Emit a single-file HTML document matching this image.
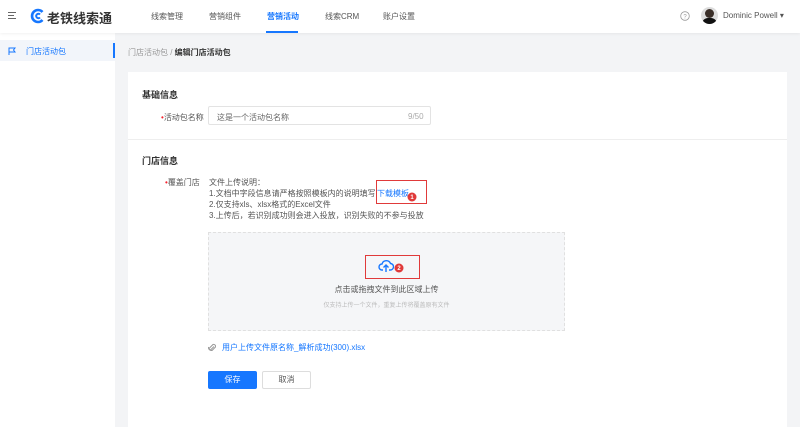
<!DOCTYPE html>
<html><head><meta charset="utf-8"><style>
*{margin:0;padding:0;box-sizing:border-box}
body{width:800px;height:427px;overflow:hidden;background:#f3f4f6;font-family:"Liberation Sans","Noto Sans CJK SC",sans-serif;font-size:8px;color:#333;position:relative}
.abs{position:absolute}
.hdr{left:0;top:0;width:800px;height:33px;background:#fff;box-shadow:0 1px 3px rgba(0,0,0,.06);z-index:2}
.nav{top:11px;font-size:8px;color:#555}
.side{left:0;top:33px;width:115px;height:394px;background:#fff}
.card{left:128px;top:72px;width:659px;height:355px;background:#fff}
.red{color:#f5222d}
</style></head><body>
<div class="abs hdr">
  <div class="abs" style="left:8px;top:12px;width:8px;height:8px">
    <div style="height:1px;background:#666;margin-bottom:2px"></div><div style="height:1px;width:6px;background:#666;margin-bottom:2px"></div><div style="height:1px;background:#666"></div>
  </div>
  <svg class="abs" style="left:30px;top:8px" width="16" height="16" viewBox="0 0 16 16"><path d="M12.5 4A6 6 0 1 0 12.5 12" fill="none" stroke="#1677ff" stroke-width="2.6"/><path d="M10 6.5A2.2 2.2 0 1 0 10 9.5" fill="none" stroke="#1677ff" stroke-width="2"/></svg>
  <div class="abs" style="left:47px;top:8px;font-size:13px;font-weight:bold;color:#333">老铁线索通</div>
  <div class="abs nav" style="left:151px">线索管理</div>
  <div class="abs nav" style="left:209px">营销组件</div>
  <div class="abs nav" style="left:267px;color:#1677ff;font-weight:bold">营销活动</div>
  <div class="abs" style="left:266px;top:31px;width:32px;height:2px;background:#1677ff"></div>
  <div class="abs nav" style="left:325px">线索CRM</div>
  <div class="abs nav" style="left:383px">账户设置</div>
  <svg class="abs" style="left:680px;top:11px" width="10" height="10" viewBox="0 0 10 10"><circle cx="5" cy="5" r="4.3" fill="none" stroke="#999" stroke-width=".8"/><text x="5" y="7.3" font-size="6" text-anchor="middle" fill="#999" font-family="Liberation Sans">?</text></svg>
  <div class="abs" style="left:701px;top:7px;width:17px;height:17px;border-radius:50%;background:#ddd;overflow:hidden"><div style="width:9px;height:9px;border-radius:50%;background:#3a2e28;margin:2px auto 0"></div><div style="width:15px;height:8px;border-radius:6px 6px 0 0;background:#111;margin:0 auto"></div></div>
  <div class="abs" style="left:723px;top:11px;font-size:8px;color:#555">Dominic Powell ▾</div>
</div>
<div class="abs side">
  <div class="abs" style="left:0;top:7px;width:115px;height:21px;background:#f2f5fa"></div>
  <div class="abs" style="left:113px;top:10px;width:2px;height:15px;background:#1677ff"></div>
  <svg class="abs" style="left:8px;top:14px" width="9" height="9" viewBox="0 0 9 9"><path d="M1 8V1h6l-1.5 2L7 5H1" fill="none" stroke="#1677ff" stroke-width="1"/></svg>
  <div class="abs" style="left:26px;top:13px;color:#1677ff">门店活动包</div>
</div>
<div class="abs" style="left:128px;top:47px;color:#999">门店活动包 / <span style="color:#333;font-weight:bold">编辑门店活动包</span></div>
<div class="abs card">
  <div class="abs" style="left:14px;top:16px;font-size:9px;font-weight:bold">基础信息</div>
  <div class="abs" style="left:33px;top:40px;color:#555"><span class="red">•</span>活动包名称</div>
  <div class="abs" style="left:80px;top:34px;width:223px;height:19px;border:1px solid #e3e3e3;border-radius:2px"></div>
  <div class="abs" style="left:89px;top:40px;color:#666">这是一个活动包名称</div>
  <div class="abs" style="left:280px;top:40px;color:#aaa">9/50</div>
  <div class="abs" style="left:0;top:67px;width:659px;height:1px;background:#eee"></div>
  <div class="abs" style="left:14px;top:82px;font-size:9px;font-weight:bold">门店信息</div>
  <div class="abs" style="left:37px;top:105px;color:#555"><span class="red">•</span>覆盖门店</div>
  <div class="abs" style="left:81px;top:105px;color:#555;line-height:11px">文件上传说明：<br>1.文档中字段信息请严格按照模板内的说明填写<br>2.仅支持xls、xlsx格式的Excel文件<br>3.上传后，若识别成功则会进入投放，识别失败的不参与投放</div>
  <div class="abs" style="left:249px;top:116px;color:#1677ff">下载模板</div>
  <div class="abs" style="left:248px;top:108px;width:51px;height:24px;border:1.5px solid #e03a3a"></div>
  <svg class="abs" style="left:279px;top:120px" width="10" height="10" viewBox="0 0 10 10"><circle cx="5" cy="5" r="4.5" fill="#e03a3a"/><text x="5" y="7.2" font-size="6" text-anchor="middle" fill="#fff" font-family="Liberation Sans" font-weight="bold">1</text></svg>
  <div class="abs" style="left:80px;top:160px;width:357px;height:99px;background:#f5f6f8;border:1px dashed #e0e0e0"></div>
  <div class="abs" style="left:237px;top:183px;width:55px;height:24px;border:1.5px solid #e03a3a"></div>
  <svg class="abs" style="left:250px;top:187px" width="16" height="14" viewBox="0 0 16 14"><path d="M5 11H4A3 3 0 0 1 4 5 4.5 4.5 0 0 1 12.5 4.5 3 3 0 0 1 12 11h-1" fill="none" stroke="#1677ff" stroke-width="1.4"/><path d="M8 13V6M5.5 8.5 8 6l2.5 2.5" fill="none" stroke="#1677ff" stroke-width="1.4"/></svg>
  <svg class="abs" style="left:266px;top:191px" width="10" height="10" viewBox="0 0 10 10"><circle cx="5" cy="5" r="4.5" fill="#e03a3a"/><text x="5" y="7.2" font-size="6" text-anchor="middle" fill="#fff" font-family="Liberation Sans" font-weight="bold">2</text></svg>
  <div class="abs" style="left:80px;top:212px;width:357px;text-align:center;color:#555">点击或拖拽文件到此区域上传</div>
  <div class="abs" style="left:80px;top:228px;width:357px;text-align:center;color:#bbb;font-size:6px">仅支持上传一个文件，重复上传将覆盖原有文件</div>
  <svg class="abs" style="left:80px;top:271px" width="8" height="9" viewBox="0 0 8 9"><path d="M6 3.5 3 6.5a1 1 0 0 1-1.5-1.5L5 1.5a2 2 0 0 1 2.5 2.5L4 7.5a3 3 0 0 1-3.5-3.5" fill="none" stroke="#999" stroke-width="1"/></svg>
  <div class="abs" style="left:94px;top:270px;color:#1677ff">用户上传文件原名称_解析成功(300).xlsx</div>
  <div class="abs" style="left:80px;top:299px;width:49px;height:18px;background:#1677ff;border-radius:2px;color:#fff;text-align:center;line-height:18px">保存</div>
  <div class="abs" style="left:134px;top:299px;width:49px;height:18px;border:1px solid #ddd;border-radius:2px;color:#555;text-align:center;line-height:16px">取消</div>
</div>
</body></html>
